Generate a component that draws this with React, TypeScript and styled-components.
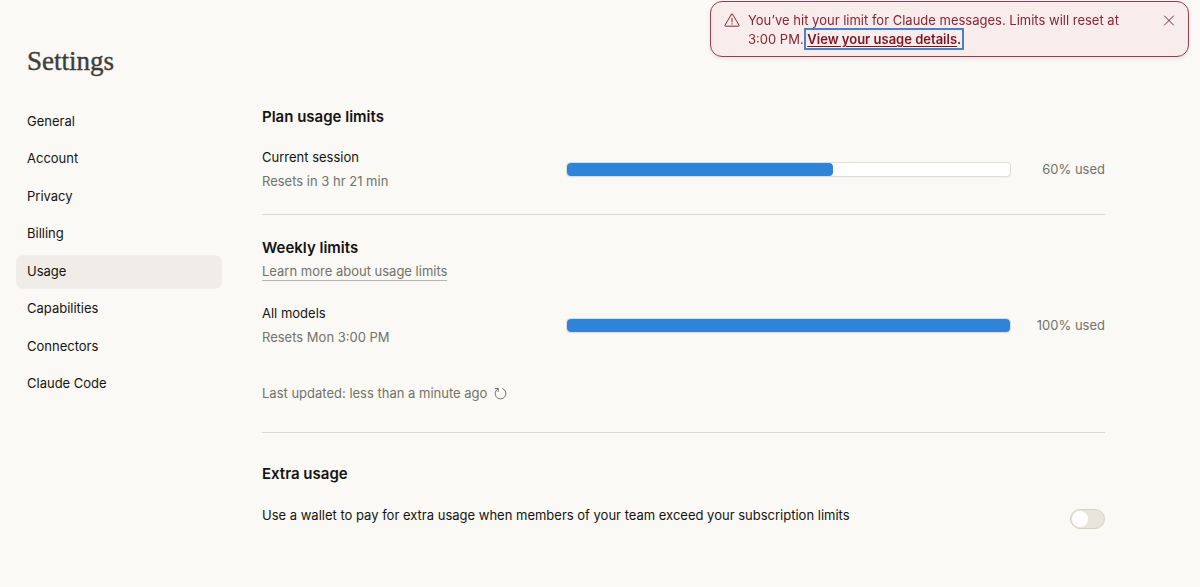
import React, { useState } from "react";
import styled, { createGlobalStyle } from "styled-components";

const GlobalStyle = createGlobalStyle`
  *, *::before, *::after { box-sizing: border-box; }
  body {
    margin: 0;
    background: #faf9f5;
    color: #141413;
    font-family: Inter, "Liberation Sans", Arial, sans-serif;
    font-size: 13px;
    line-height: 20px;
  }
  h1, h2, p, ul { margin: 0; padding: 0; }
  button { font: inherit; color: inherit; background: none; border: 0; padding: 0; cursor: pointer; }
`;

const Page = styled.div`
  padding: 44px 95px 40px 16px;
`;

const PageTitle = styled.h1`
  padding-left: 11px;
  font-family: "Liberation Serif", "Times New Roman", serif;
  font-size: 27px;
  font-weight: 500;
  line-height: 34px;
  color: #3d3d3a;
  -webkit-text-stroke: 0.4px #3d3d3a;
`;

const Columns = styled.div`
  display: grid;
  grid-template-columns: 206px minmax(0, 1fr);
  gap: 40px;
  align-items: start;
  margin-top: 27px;
`;

const NavList = styled.ul`
  display: flex;
  flex-direction: column;
  justify-content: space-between;
  height: 296px;
  list-style: none;
`;

const NavLink = styled.a<{ $active?: boolean }>`
  display: block;
  padding: 6px 11px 8px;
  border-radius: 8px;
  color: #141413;
  text-decoration: none;
  background: ${(p) => (p.$active ? "#f0ede8" : "transparent")};
`;

const Section = styled.section<{ $space: number }>`
  padding-bottom: ${(p) => p.$space}px;
  & + & {
    border-top: 1px solid #dad9d4;
    padding-top: 21px;
  }
`;

const SectionTitle = styled.h2`
  font-size: 15px;
  font-weight: 600;
  line-height: 24px;
`;

const LearnMore = styled.a`
  display: inline-block;
  margin-top: 2px;
  color: #73726c;
  line-height: 18px;
  text-decoration: none;
  border-bottom: 1px solid #b5b4ae;
`;

const UsageRow = styled.div<{ $space: number }>`
  display: flex;
  align-items: center;
  margin-top: ${(p) => p.$space}px;
`;

const UsageInfo = styled.div`
  flex: 0 0 304px;
`;

const Muted = styled.p`
  margin-top: 4px;
  color: #73726c;
`;

const Track = styled.div`
  flex: 1;
  height: 15px;
  border: 1px solid #dfded8;
  border-radius: 4px;
  background: #fff;
  box-shadow: 0 1px 1px rgba(0, 0, 0, 0.03);
`;

const Fill = styled.div`
  height: 100%;
  border-radius: 4px;
  background: #2f84d8;
`;

const Percent = styled.span`
  flex: 0 0 94px;
  text-align: right;
  color: #73726c;
`;

const Updated = styled.div`
  display: flex;
  align-items: center;
  gap: 7px;
  margin-top: 36px;
  color: #73726c;
`;

const IconButton = styled.button`
  display: flex;
  flex: none;
`;

const ExtraSection = styled(Section)`
  & > h2 { margin-top: 8px; }
`;

const ExtraRow = styled.div`
  display: flex;
  justify-content: space-between;
  gap: 24px;
  margin-top: 19px;
`;

const Switch = styled.input`
  appearance: none;
  flex: none;
  width: 35px;
  height: 20px;
  margin: 4px 0 0;
  padding: 1px;
  border: 1px solid #d3d1c8;
  border-radius: 10px;
  background: #e8e6dc;
  cursor: pointer;
  &::before {
    content: "";
    display: block;
    width: 16px;
    height: 16px;
    border-radius: 50%;
    background: #fff;
  }
  &:checked { background: #2f84d8; }
  &:checked::before { margin-left: 15px; }
`;

const Toast = styled.div`
  position: fixed;
  top: 1px;
  right: 11px;
  display: flex;
  align-items: flex-start;
  gap: 8px;
  width: 479px;
  max-width: calc(100% - 22px);
  padding: 9px 13px 7px;
  border: 1px solid #9a3d48;
  border-radius: 12px;
  background: #f9ecec;
  color: #8a2430;
  line-height: 19px;
  box-shadow: 0 2px 4px rgba(0, 0, 0, 0.08);
`;

const ToastText = styled.p`
  flex: 1;
  padding-right: 24px;
`;

const ToastLink = styled.a`
  color: #7d1420;
  font-weight: 600;
  text-decoration: none;
  outline: 2px solid #4a83c4;
  outline-offset: 1px;
`;

const Underlined = styled.span`
  text-decoration: underline;
  text-underline-offset: 2px;
`;

const WarningIcon = () => (
  <svg width="16" height="18" viewBox="0 0 16 18" fill="none" stroke="currentColor" strokeLinejoin="round" strokeLinecap="round" aria-hidden="true">
    <path d="M7.5 3.2 1 14.2q-.5 1 .6 1h12.8q1.100 0 .6-1L8.500 3.200q-.5-.8-1 0Z" />
    <path d="M8 7.300v3.700" />
    <circle cx="8" cy="12.900" r=".6" fill="currentColor" stroke="none" />
  </svg>
);

const CloseIcon = () => (
  <svg width="12" height="19" viewBox="0 0 12 19" fill="none" stroke="currentColor" strokeLinecap="round" aria-hidden="true">
    <path d="m1.500 5 9 9m0-9-9 9" />
  </svg>
);

const RefreshIcon = () => (
  <svg width="13" height="13" viewBox="0 0 13 13" fill="none" stroke="currentColor" strokeLinecap="round" strokeLinejoin="round" aria-hidden="true">
    <path d="M1.200 1.500h3v3" />
    <path d="M4.200 1.600A5.400 5.400 0 1 0 8.600 1.500" />
  </svg>
);

const navItems = ["General", "Account", "Privacy", "Billing", "Usage", "Capabilities", "Connectors", "Claude Code"];

interface UsageProps {
  title: string;
  resets: string;
  percent: number;
  space: number;
}

const Usage = ({ title, resets, percent, space }: UsageProps) => (
  <UsageRow $space={space}>
    <UsageInfo>
      <p>{title}</p>
      <Muted>{resets}</Muted>
    </UsageInfo>
    <Track role="progressbar" aria-label={title} aria-valuenow={percent} aria-valuemin={0} aria-valuemax={100}>
      <Fill style={{ width: `${percent}%` }} />
    </Track>
    <Percent>{percent}% used</Percent>
  </UsageRow>
);

export default function App() {
  const [wallet, setWallet] = useState(false);
  const [toastOpen, setToastOpen] = useState(true);

  return (
    <>
      <GlobalStyle />
      <Page>
        <PageTitle>Settings</PageTitle>
        <Columns>
          <nav aria-label="Settings">
            <NavList>
              {navItems.map((item) => (
                <li key={item}>
                  <NavLink href="#" $active={item === "Usage"} aria-current={item === "Usage" ? "page" : undefined}>
                    {item}
                  </NavLink>
                </li>
              ))}
            </NavList>
          </nav>
          <main>
            <Section $space={23}>
              <SectionTitle>Plan usage limits</SectionTitle>
              <Usage title="Current session" resets="Resets in 3 hr 21 min" percent={60} space={18} />
            </Section>
            <Section $space={29}>
              <SectionTitle>Weekly limits</SectionTitle>
              <LearnMore href="#">Learn more about usage limits</LearnMore>
              <Usage title="All models" resets="Resets Mon 3:00 PM" percent={100} space={22} />
              <Updated>
                <span>Last updated: less than a minute ago</span>
                <IconButton type="button" aria-label="Refresh"><RefreshIcon /></IconButton>
              </Updated>
            </Section>
            <ExtraSection $space={0}>
              <SectionTitle>Extra usage</SectionTitle>
              <ExtraRow>
                <label htmlFor="wallet">
                  Use a wallet to pay for extra usage when members of your team exceed your subscription limits
                </label>
                <Switch id="wallet" type="checkbox" role="switch" checked={wallet} onChange={(e) => setWallet(e.target.checked)} />
              </ExtraRow>
            </ExtraSection>
          </main>
        </Columns>
      </Page>
      {toastOpen && (
        <Toast role="alert">
          <WarningIcon />
          <ToastText>
            You’ve hit your limit for Claude messages. Limits will reset at 3:00 PM.{" "}
            <ToastLink href="#"><Underlined>View your usage details</Underlined>.</ToastLink>
          </ToastText>
          <IconButton type="button" aria-label="Dismiss" onClick={() => setToastOpen(false)}><CloseIcon /></IconButton>
        </Toast>
      )}
    </>
  );
}
